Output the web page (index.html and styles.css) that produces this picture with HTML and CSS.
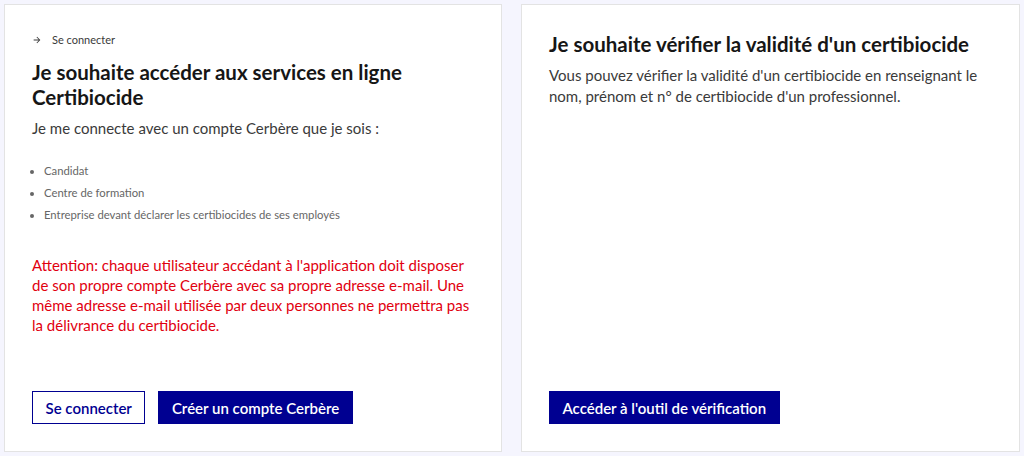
FILE: index.html
```html
<!DOCTYPE html>
<html lang="fr">
<head>
    <meta charset="UTF-8">
    <meta name="viewport" content="width=device-width, initial-scale=1.0">
    <title>Certibiocide</title>
    <link rel="stylesheet" href="styles.css">
</head>
<body>
    <div class="grid">
        <div class="card">
            <a class="back-link" href="#">
                <svg width="10" height="10" viewBox="0 0 24 24"><path d="M16.17 13H4v-2h12.17l-5.36-5.36 1.41-1.41L20 12l-7.78 7.78-1.41-1.42z" fill="#3a3a3a"/></svg>
                Se connecter
            </a>
            <h2>Je souhaite accéder aux services en ligne Certibiocide</h2>
            <p class="lead">Je me connecte avec un compte Cerbère que je sois :</p>
            <ul class="profiles">
                <li>Candidat</li>
                <li>Centre de formation</li>
                <li>Entreprise devant déclarer les certibiocides de ses employés</li>
            </ul>
            <p class="warning">Attention: chaque utilisateur accédant à l'application doit disposer de son propre compte Cerbère avec sa propre adresse e-mail. Une même adresse e-mail utilisée par deux personnes ne permettra pas la délivrance du certibiocide.</p>
            <div class="actions">
                <button class="btn btn-secondary">Se connecter</button>
                <button class="btn">Créer un compte Cerbère</button>
            </div>
        </div>
        <div class="card">
            <h2>Je souhaite vérifier la validité d'un certibiocide</h2>
            <p class="lead">Vous pouvez vérifier la validité d'un certibiocide en renseignant le nom, prénom et n° de certibiocide d'un professionnel.</p>
            <div class="actions">
                <button class="btn">Accéder à l'outil de vérification</button>
            </div>
        </div>
    </div>
</body>
</html>
```

FILE: styles.css
```css
body {
    margin: 0;
    padding: 4px;
    background: #f5f5fe;
    font-family: 'Lato', 'Noto Sans', sans-serif;
    color: #161616;
}

.grid {
    display: grid;
    grid-template-columns: 498px 499px;
    gap: 19px;
    height: 448px;
}

.card {
    background: #fff;
    border: 1px solid #e3e3e3;
    padding: 27px;
    display: flex;
    flex-direction: column;
}

.back-link {
    display: flex;
    align-items: center;
    gap: 10px;
    font-size: 11px;
    color: #3a3a3a;
    text-decoration: none;
    line-height: 16px;
    margin-bottom: 12px;
}

h2 {
    margin: 0 0 8px;
    font-size: 20.5px;
    line-height: 25px;
    font-weight: 700;
    color: #161616;
}

.lead {
    margin: 0;
    font-size: 15px;
    line-height: 21px;
    color: #3a3a3a;
}

.profiles {
    margin: 24px 0 0;
    padding-left: 12px;
    font-size: 11.3px;
    color: #666;
}

.profiles li {
    line-height: 16px;
    margin-bottom: 6px;
}

.warning {
    margin: 26px 0 0;
    font-size: 15px;
    line-height: 20px;
    color: #e1000f;
}

.actions {
    margin-top: auto;
    display: flex;
    gap: 13px;
}

.btn {
    font-family: inherit;
    font-size: 15px;
    font-weight: 600;
    height: 33px;
    padding: 0 12.5px;
    background: #000091;
    color: #fff;
    border: 1px solid #000091;
    cursor: pointer;
}

.btn-secondary {
    background: #fff;
    color: #000091;
}
```
